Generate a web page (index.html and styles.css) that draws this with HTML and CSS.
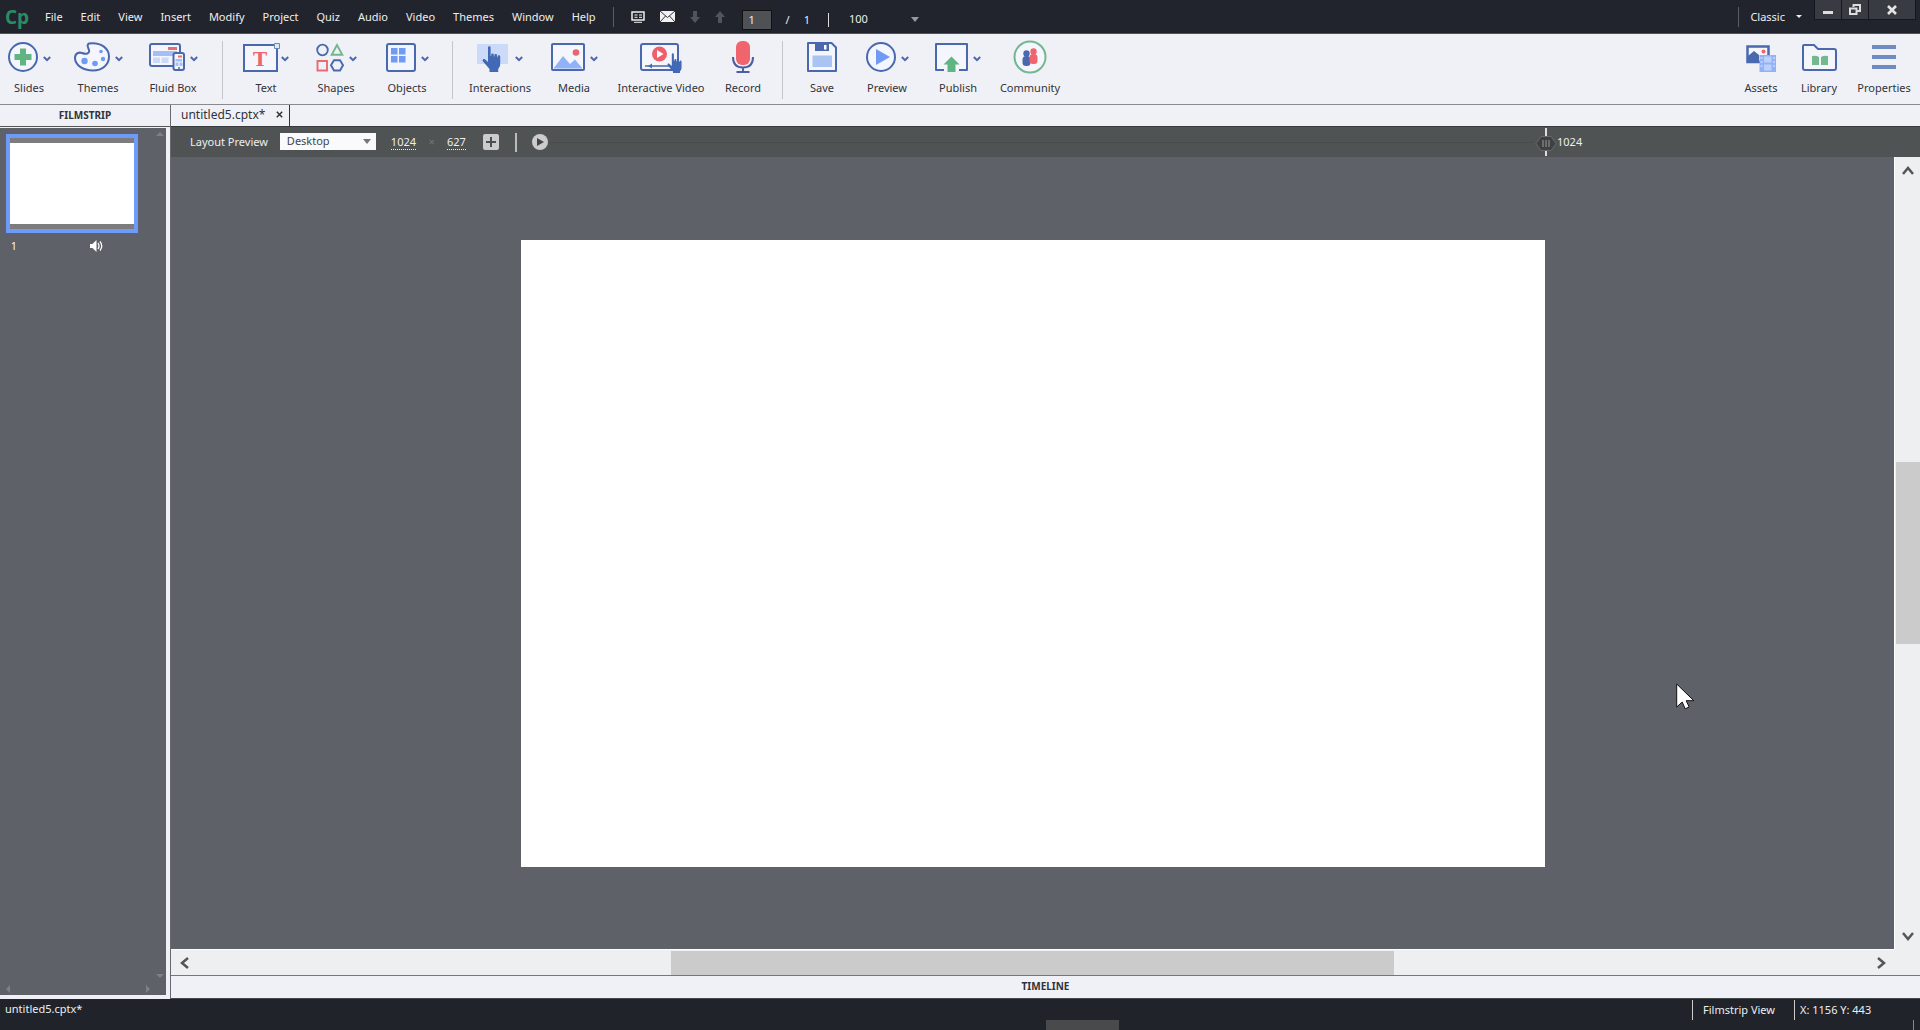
FILE: index.html
```html
<!DOCTYPE html>
<html lang="en">
<head>
<meta charset="utf-8">
<title>untitled5.cptx</title>
<link rel="stylesheet" href="styles.css">
</head>
<body>
<svg class="defs" aria-hidden="true">
  <symbol id="chevron" viewBox="0 0 8 6"><path d="M0.8 1l3.2 3.2L7.2 1" fill="none" stroke="#4a68ae" stroke-width="2"/></symbol>
  <symbol id="hand" viewBox="0 0 20 26"><path d="M6 1.5a1.3 1.3 0 0 1 2.6 0V10h.6V8.6a1.3 1.3 0 0 1 2.6.2V10.400h.6V9.300a1.300 1.300 0 0 1 2.600.200v1.700h.6v-.8a1.300 1.300 0 0 1 2.600.100V18c0 2-.8 3.500-2 5v3H7.500v-3L1 15.500c-1.200-1.800.8-3.200 2.200-1.900L6 16z" fill="#4169b5"/></symbol>
</svg>
<div class="app">
  <header class="menubar">
    <span class="logo">Cp</span>
    <nav class="menus">
      <button>File</button><button>Edit</button><button>View</button><button>Insert</button><button>Modify</button><button>Project</button><button>Quiz</button><button>Audio</button><button>Video</button><button>Themes</button><button>Window</button><button>Help</button>
    </nav>
    <span class="rule"></span>
    <div class="quick">
      <button aria-label="Notes"><svg width="14" height="12" viewBox="0 0 14 12"><rect x="1" y="1" width="12" height="8" fill="none" stroke="#eee" stroke-width="1.500"/><path d="M3.500 4h3M8 4h3M3.500 6.300h3M8 6.300h3M3 11.300h8" stroke="#eee"/></svg></button>
      <button aria-label="Mail"><svg width="15" height="11" viewBox="0 0 15 11"><path d="M0 0h15v11H0z" fill="#f2f2f2"/><path d="M0 0l7.500 6.500L15 0M0 11l5.500-6M15 11L9.500 5" fill="none" stroke="#30303a"/></svg></button>
      <button aria-label="Next slide"><svg width="10" height="12" viewBox="0 0 10 12"><path d="M3 0h4v6h3l-5 6-5-6h3z" fill="#50555a"/></svg></button>
      <button aria-label="Previous slide"><svg width="10" height="12" viewBox="0 0 10 12"><path d="M3 12h4V6h3L5 0 0 6h3z" fill="#50555a"/></svg></button>
    </div>
    <div class="pager">
      <input type="text" value="1" aria-label="Current slide">
      <span>/</span><span>1</span><span class="bar"></span>
    </div>
    <div class="zoom">
      <select aria-label="Zoom"><option>100</option></select><span class="caret"></span>
    </div>
    <span class="rule end"></span>
    <button class="workspace">Classic <span class="caret"></span></button>
    <div class="window">
      <button aria-label="Minimize"><svg width="10" height="12" viewBox="0 0 10 12"><path d="M0 7h10v3H0z" fill="#ddd"/></svg></button>
      <button aria-label="Restore"><svg width="12" height="12" viewBox="0 0 12 12"><path d="M4.500 3V1h6.500v6H8.500M1 4.500h6.500v5.500H1z" fill="none" stroke="#ddd" stroke-width="2"/></svg></button>
      <button class="close" aria-label="Close"><svg width="10" height="10" viewBox="0 0 10 10"><path d="M1 1l8 8M9 1L1 9" stroke="#e4e4e4" stroke-width="2.600"/></svg></button>
    </div>
  </header>

  <div class="toolbar">
    <div class="tools">
      <button><span class="icon"><svg width="30" height="30" viewBox="0 0 30 30"><circle cx="15" cy="15" r="14" fill="#f5f6fc" stroke="#4a68ae" stroke-width="2"/><path d="M12 6.500h6V12h5.500v6H18v5.500h-6V18H6.500v-6H12z" fill="#61b583"/></svg><svg class="chev"><use href="#chevron"/></svg></span>Slides</button>
      <button><span class="icon"><svg width="36" height="30" viewBox="0 0 36 30"><path d="M15 1.500C28 0 35 7 35 14.500 35 23 28 28.500 19 28.500 9 28.500 1 23 1 16c0-5 4-6 7-5 4 1.500 8 1 7-3-.800-3-3-5 0-6.500z" fill="#f5f6fc" stroke="#4a68ae" stroke-width="2"/><g fill="#6f9bf5"><circle cx="10.500" cy="19" r="3.200"/><circle cx="21" cy="21.500" r="2.800"/><circle cx="29" cy="17" r="2.200"/><circle cx="27" cy="9.500" r="1.800"/></g></svg><svg class="chev"><use href="#chevron"/></svg></span>Themes</button>
      <button><span class="icon"><svg width="36" height="30" viewBox="0 0 36 30"><rect x="1" y="2" width="30" height="22" rx="2" fill="#f5f6fc" stroke="#4a68ae" stroke-width="2"/><path d="M19 5h9v3h-9z" fill="#ea6b73"/><path d="M4 9h24v5H4z" fill="#a4bff6"/><path d="M4 15.500h7V21H4zM12.500 15.500h7V21h-7z" fill="#ccdafa"/><rect x="24.500" y="11" width="10.500" height="17" rx="2" fill="#f5f6fc" stroke="#4a68ae" stroke-width="2"/><path d="M29 13.500h4v2h-4z" fill="#ea6b73"/><path d="M26.500 17h6.500v2.500h-6.500zM26.500 20.500h3V24h-3zM30.500 20.500h3V24h-3z" fill="#a4bff6"/><circle cx="30" cy="26" r="1" fill="#4a68ae"/></svg><svg class="chev"><use href="#chevron"/></svg></span>Fluid Box</button>
      <span class="divider"></span>
      <button><span class="icon tight"><svg width="37" height="30" viewBox="0 0 37 30"><path d="M1 3h33v26H1z" fill="#f5f6fc" stroke="#4a68ae" stroke-width="2"/><path d="M31.500 1.500h5v5h-5z" fill="#dce8f6" stroke="#6d88b5"/><text class="letter" x="17" y="24" text-anchor="middle">T</text></svg><svg class="chev"><use href="#chevron"/></svg></span>Text</button>
      <button><span class="icon"><svg width="28" height="30" viewBox="0 0 28 30"><circle cx="6.500" cy="8" r="5.300" fill="none" stroke="#4a68ae" stroke-width="1.800"/><path d="M21 3l5.300 9.800H15.700z" fill="none" stroke="#74b692" stroke-width="1.900"/><path d="M1.500 19h9.500v9.500H1.500z" fill="none" stroke="#ea6b73" stroke-width="1.900"/><path d="M18 18.300h6l3 5-3 5.200h-6l-3-5.200z" fill="none" stroke="#4a68ae" stroke-width="1.900"/></svg><svg class="chev"><use href="#chevron"/></svg></span>Shapes</button>
      <button><span class="icon"><svg width="30" height="30" viewBox="0 0 30 30"><rect x="1" y="2" width="28" height="27" rx="2" fill="#f2f5fd" stroke="#4a68ae" stroke-width="2"/><path d="M5 6h6.500v6.500H5zM13 6h6.500v6.500H13zM5 14h6.500v6.500H5zM13 14h6.500v6.500H13z" fill="#6f9bf5"/></svg><svg class="chev"><use href="#chevron"/></svg></span>Objects</button>
      <span class="divider"></span>
      <button><span class="icon wide"><svg width="31" height="30" viewBox="0 0 31 30"><path d="M0 2h31v20H0z" fill="#ccdafa"/><use href="#hand" x="5" y="4" width="20" height="26"/></svg><svg class="chev"><use href="#chevron"/></svg></span>Interactions</button>
      <button><span class="icon"><svg width="34" height="30" viewBox="0 0 34 30"><rect x="1" y="2" width="32" height="26" rx="1" fill="#f5f6fc" stroke="#4a68ae" stroke-width="2"/><path d="M2.500 26.500L12 14l7 8 5-4.500 7.500 9z" fill="#91b2f8"/><circle cx="25" cy="10.500" r="3.300" fill="#e9656f"/></svg><svg class="chev"><use href="#chevron"/></svg></span>Media</button>
      <button><span class="icon"><svg width="42" height="32" viewBox="0 0 42 32"><rect x="1" y="3" width="37" height="26" rx="2" fill="#f5f6fc" stroke="#4a68ae" stroke-width="2"/><circle cx="19.500" cy="13" r="7.500" fill="#ef5f6a"/><path d="M17 9l6.500 4-6.500 4z" fill="#fff"/><path d="M5 25h25" stroke="#4a68ae" stroke-width="1.500"/><path d="M12 22.500v5L8 25z" fill="#4a68ae"/><use href="#hand" x="27" y="12" width="16" height="21"/></svg></span>Interactive Video</button>
      <button><span class="icon"><svg width="22" height="32" viewBox="0 0 22 32"><rect x="4" y="0" width="14" height="24" rx="6" fill="#f0646d"/><path d="M1 16c0 7 4 10.500 10 10.500S21 23 21 16M11 26v5M4.500 31h13" fill="none" stroke="#4a5fa5" stroke-width="2"/></svg></span>Record</button>
      <span class="divider"></span>
      <button><span class="icon"><svg width="30" height="30" viewBox="0 0 30 30"><path d="M1 1h23.500L29 5.500V29H1z" fill="#f5f6fc" stroke="#4a68ae" stroke-width="2" stroke-linejoin="round"/><path d="M8 1h14v8H8z" fill="#4a68ae"/><path d="M17 3h2.500v4.500H17z" fill="#fff"/><path d="M5.500 13.500h19.500V25H5.500z" fill="#a9c3f3"/></svg></span>Save</button>
      <button><span class="icon"><svg width="30" height="30" viewBox="0 0 30 30"><circle cx="15" cy="15" r="14" fill="#f3f6fe" stroke="#4a68ae" stroke-width="2"/><path d="M10 7l14 8-14 8z" fill="#6f9bf5"/></svg><svg class="chev"><use href="#chevron"/></svg></span>Preview</button>
      <button><span class="icon"><svg width="33" height="30" viewBox="0 0 33 30"><path d="M9 28H1V2h31v26h-8" fill="#f5f6fc" stroke="#4a68ae" stroke-width="2" stroke-linejoin="round"/><path d="M16.500 14.500l8 8H20.500V30h-8v-7.500h-4z" fill="#61b583"/></svg><svg class="chev"><use href="#chevron"/></svg></span>Publish</button>
      <button><span class="icon"><svg width="34" height="34" viewBox="0 0 34 34"><circle cx="17" cy="17" r="15.500" fill="#f5f6fc" stroke="#74b692" stroke-width="2"/><circle cx="13.500" cy="13.500" r="3.200" fill="#4a68ae"/><rect x="9.500" y="16" width="8" height="10" rx="3.500" fill="#4a68ae"/><circle cx="20.500" cy="11.500" r="3.200" fill="#f0646d"/><rect x="16.500" y="14" width="8" height="10" rx="3.500" fill="#f0646d"/></svg></span>Community</button>
    </div>
    <div class="tools side">
      <button><span class="icon"><svg width="30" height="30" viewBox="0 0 30 30"><path d="M1.500 4.500h21V20h-21z" fill="#f5f6fc" stroke="#4a68ae" stroke-width="2.500"/><path d="M2 21v-7l6-5 5 4v8z" fill="#4a68ae"/><circle cx="17.500" cy="9.500" r="2" fill="#f0646d"/><path d="M13.500 13H30v17H13.500z" fill="#92b2f6"/><path d="M18 14.500h7.500v6H18zM18 22.500h7.500v6H18zM14.500 15h2v2h-2zM14.500 19h2v2h-2zM14.500 23h2v2h-2zM27 15h2v2h-2zM27 19h2v2h-2zM27 23h2v2h-2z" fill="#bcd0fb"/></svg></span>Assets</button>
      <button><span class="icon"><svg width="35" height="30" viewBox="0 0 35 30"><path d="M1 26V4q0-1 1-1h10l4 4h16q2 0 2 2v17q0 2-2 2H3q-2 0-2-2z" fill="#f5f6fc" stroke="#4a68ae" stroke-width="2"/><path d="M10 14q4-1 7 1v8h-7zM26 14q-4-1-7 1v8h7z" fill="#74b98e"/></svg></span>Library</button>
      <button><span class="icon"><svg width="24" height="30" viewBox="0 0 24 30"><path d="M0 5h24M0 15h24M0 25h24" stroke="#6e8bc3" stroke-width="4"/></svg></span>Properties</button>
    </div>
  </div>

  <div class="workarea">
    <aside class="filmstrip">
      <h2>FILMSTRIP</h2>
      <div class="slides">
        <div class="thumb"><div></div></div>
        <div class="meta"><span>1</span><svg width="13" height="12" viewBox="0 0 13 12"><path d="M0 4h2.500L6.500 0v12l-4-4H0z" fill="#fff"/><path d="M8 3q2 3 0 6M10 1.500q3.500 4.500 0 9" fill="none" stroke="#fff" stroke-width="1.300"/></svg></div>
        <i class="left"></i><i class="right"></i><i class="down"></i><i class="up"></i>
      </div>
    </aside>

    <main class="document">
      <div class="tabs"><div class="tab">untitled5.cptx* <button aria-label="Close tab"><svg width="7" height="7" viewBox="0 0 7 7"><path d="M.8.8l5.400 5.400M6.200.8L.8 6.200" stroke="#333" stroke-width="1.500"/></svg></button></div></div>
      <div class="layoutbar">
        <label for="layout">Layout Preview</label>
        <div class="pick"><select id="layout"><option>Desktop</option></select><span class="caret"></span></div>
        <span class="value">1024</span><span class="times">×</span><span class="value">627</span>
        <button class="add" aria-label="Add view"><svg width="16" height="16" viewBox="0 0 16 16"><rect width="16" height="16" rx="2" fill="#ccc"/><path d="M8 3v10M3 8h10" stroke="#4c4f50" stroke-width="2"/></svg></button>
        <span class="bar"></span>
        <button class="play" aria-label="Play"><svg width="16" height="16" viewBox="0 0 16 16"><circle cx="8" cy="8" r="8" fill="#ccc"/><path d="M5 4l7 4-7 4z" fill="#444"/></svg></button>
        <span class="track"></span>
        <div class="marker"><svg width="22" height="28" viewBox="0 0 22 28"><path d="M11 0v28" stroke="#ddd" stroke-width="2"/><path d="M1 15.500L6 8.500h10l5 7-5 7H6z" fill="#3e4142" stroke="#666a6d"/><path d="M8 12v7M11 12v7M14 12v7" stroke="#999"/></svg><span>1024</span></div>
      </div>
      <div class="stage">
        <div class="canvas">
          <div class="slide"></div>
          <svg class="cursor" width="19" height="27" viewBox="0 0 19 27"><path d="M.7 1v23l5.500-5 3 6.800 4-1.800-3-6.300h7.600z" fill="#fff" stroke="#111"/></svg>
        </div>
        <div class="scroll vertical"><button aria-label="Scroll up"><svg width="12" height="9" viewBox="0 0 12 9"><path d="M1 8l5-6 5 6" fill="none" stroke="#555" stroke-width="2.500"/></svg></button><div class="grip"></div><button aria-label="Scroll down"><svg width="12" height="9" viewBox="0 0 12 9"><path d="M1 1l5 6 5-6" fill="none" stroke="#555" stroke-width="2.500"/></svg></button></div>
        <div class="scroll horizontal"><button aria-label="Scroll left"><svg width="9" height="12" viewBox="0 0 9 12"><path d="M8 1L2 6l6 5" fill="none" stroke="#555" stroke-width="2.500"/></svg></button><div class="grip"></div><button aria-label="Scroll right"><svg width="9" height="12" viewBox="0 0 9 12"><path d="M1 1l6 5-6 5" fill="none" stroke="#555" stroke-width="2.500"/></svg></button></div>
        <div class="corner"></div>
      </div>
      <h2 class="timeline">TIMELINE</h2>
    </main>
  </div>

  <footer class="statusbar">
    <span class="file">untitled5.cptx*</span>
    <span class="view">Filmstrip View</span>
    <span class="coords">X: 1156 Y: 443</span>
    <i class="dock"></i><i class="edge"></i>
  </footer>
</div>
</body>
</html>
```
FILE: styles.css
```css
* { box-sizing: border-box; }
body { margin: 0; font: 11px/16px "Noto Sans", "Open Sans", sans-serif; color: #30333a; background: #22242d; }
button, select, input { margin: 0; padding: 0; border: 0; background: none; font: inherit; color: inherit; }
select { appearance: none; }
svg { display: block; flex: none; }
h2 { margin: 0; font-size: 10px; line-height: 20px; font-weight: 700; text-align: center; }
.defs { position: absolute; width: 0; height: 0; }
.app { display: flex; flex-direction: column; min-height: 100vh; }
.caret { flex: none; border: 4px solid transparent; border-top: 5px solid #999; border-bottom: 0; }

.menubar { display: flex; height: 34px; border-bottom: 1px solid #50525c; background: #22242d; color: #eee; align-items: center; }
.logo { width: 36px; padding-left: 5px; font: 700 19px/30px "Open Sans", sans-serif; color: #2b8c63; }
.menus { display: flex; }
.menus button { padding: 0 9px; }
.rule { width: 1px; height: 20px; margin-left: 8px; background: #5a5c63; }
.quick { display: flex; align-items: center; gap: 15px; padding: 4px 17px; }
.pager { display: flex; align-items: center; gap: 18px; padding-top: 6px; }
.pager input { width: 30px; height: 20px; padding: 0 6px; border: 1px solid #111; background: #4e5254; }
.pager .bar { width: 1px; height: 14px; background: #ddd; }
.pager span:nth-child(2) { margin-right: -4px; margin-left: -4px; }
.zoom { display: flex; align-items: center; width: 70px; margin-left: 20px; padding-top: 5px; }
.zoom select { flex: 1; }
.rule.end { margin-left: auto; }
.workspace { display: flex; align-items: center; gap: 11px; padding: 0 8px 0 11px; }
.workspace .caret { border-width: 3px; border-top-color: #eee; border-bottom: 0; }
.window { display: flex; align-self: flex-start; margin: 0 4px; border: 1px solid #15171c; border-top: 0; }
.window button { display: grid; place-items: center; width: 27px; height: 19px; background: #383b41; border-right: 1px solid #17191e; }
.window .close { width: 46px; border: 0; }

.toolbar { display: flex; justify-content: space-between; height: 71px; border-bottom: 1px solid #888a8e; background: #f0f1f6; }
.tools { display: grid; grid-template-columns: 58px 80px 70px 28px 60px 80px 62px 28px 68px 80px 94px 70px 8px 72px 58px 84px 60px; }
.tools.side { grid-template-columns: 58px 58px 72px; }
.tools button { display: flex; flex-direction: column; align-items: center; padding-top: 6px; white-space: nowrap; }
.icon { display: flex; align-items: center; justify-content: center; gap: 5px; height: 34px; margin-bottom: 6px; }
.icon.tight { gap: 1px; }
.icon.wide { gap: 7px; }
.letter { font: 700 19px "DejaVu Serif", serif; fill: #f0646d; }
.chev { width: 8px; height: 6px; margin-top: 4px; }
.divider { justify-self: center; width: 1px; height: 58px; margin-top: 7px; background: #c4c6cb; }

.workarea { flex: 1; display: flex; background: #f0f1f6; }
.filmstrip { display: flex; flex-direction: column; width: 170px; padding-bottom: 4px; }
.filmstrip h2 { height: 22px; border-bottom: 1px solid #555; }
.slides { position: relative; flex: 1; margin: 1px 4px 0 0; padding: 6px; background: #5e6168; color: #fff; }
.thumb { width: 132px; height: 99px; padding: 5px 0; border: 4px solid #6e9bfa; background: #7c7c7c; }
.thumb div { height: 100%; background: #fff; }
.meta { display: flex; align-items: center; gap: 73px; padding: 5px; font-size: 10px; }
.slides i { position: absolute; border: 4px solid transparent; }
.slides .left { left: 2px; bottom: 2px; border-right-color: #7d8087; }
.slides .right { right: 12px; bottom: 2px; border-left-color: #7d8087; }
.slides .down { right: 2px; bottom: 13px; border-top-color: #7d8087; }
.slides .up { right: 2px; top: 0; border-bottom-color: #7d8087; }

.document { flex: 1; display: flex; flex-direction: column; min-width: 0; border-left: 1px solid #666970; }
.tabs { display: flex; height: 22px; border-bottom: 1px solid #383a3d; }
.tab { display: flex; align-items: center; gap: 11px; padding: 0 6px 2px 10px; border-right: 1px solid #333; font-size: 12px; }
.layoutbar { display: flex; align-items: center; height: 30px; padding-left: 19px; background: #505354; color: #eee; }
.pick { display: flex; align-items: center; width: 96px; height: 17px; margin: 0 15px 2px 12px; padding: 0 5px; background: #fafafc; color: #444; }
.pick select { flex: 1; height: 17px; padding-left: 2px; }
.pick .caret { border-top-color: #777; }
.value { border-bottom: 1px dotted #eee; line-height: 14px; }
.times { width: 31px; text-align: center; color: #777; }
.add { margin-left: 17px; }
.layoutbar .bar { width: 2px; height: 19px; margin: 0 15px 0 16px; background: #bbb; }
.track { flex: 1; height: 1px; background: #494c4d; }
.marker { display: flex; align-items: center; width: 385px; }
.stage { flex: 1; display: grid; grid-template: 1fr 26px / 1fr 26px; min-height: 680px; }
.canvas { position: relative; display: grid; place-items: center; background: #5e6168; }
.slide { width: 1024px; max-width: 90%; aspect-ratio: 1024 / 627; background: #fff; }
.cursor { position: absolute; right: 199px; bottom: 239px; }
.scroll { display: flex; align-items: center; justify-content: space-between; background: #eeeff1; }
.scroll button { display: grid; place-items: center; width: 26px; height: 26px; }
.scroll .grip { background: #cbcbcc; }
.vertical { flex-direction: column; border-left: 1px solid #fff; }
.vertical .grip { width: 24px; height: 23%; }
.horizontal { border-top: 1px solid #fff; }
.horizontal .grip { width: 42%; height: 24px; }
.corner { background: #eeeff1; }
.timeline { height: 24px; border-top: 1px solid #777; border-bottom: 1px solid #444a4c; }

.statusbar { position: relative; display: flex; height: 31px; padding-left: 5px; align-items: flex-start; background: #21232b; color: #eee; line-height: 20px; }
.file { margin-right: auto; }
.view, .coords { margin-top: 1px; border-left: 1px solid #ccc; }
.view { width: 102px; padding-left: 10px; }
.coords { width: 126px; padding-left: 5px; }
.dock { position: absolute; left: 1046px; bottom: 0; width: 73px; height: 10px; background: #494a4c; }
.edge { position: absolute; right: 6px; bottom: 0; width: 1px; height: 10px; background: #888; }
```
